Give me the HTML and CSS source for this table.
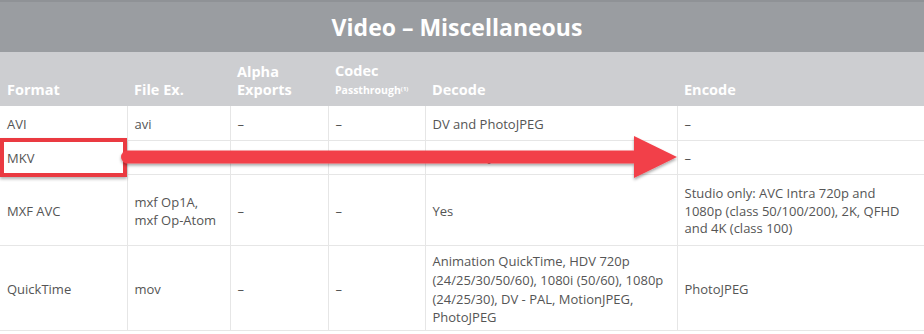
FILE: index.html
```html
<!DOCTYPE html>
<html>
<head>
<meta charset="utf-8">
<link rel="stylesheet" href="styles.css">
</head>
<body>
<div class="sheet">
  <div class="title">Video – Miscellaneous</div>
  <table class="grid">
    <colgroup>
      <col class="c1"><col class="c2"><col class="c3"><col class="c4"><col class="c5"><col class="c6">
    </colgroup>
    <thead>
      <tr class="head">
        <th>Format</th>
        <th>File Ex.</th>
        <th>Alpha<br>Exports</th>
        <th>Codec<br><span class="small">Passthrough<sup>(1)</sup></span></th>
        <th>Decode</th>
        <th>Encode</th>
      </tr>
    </thead>
    <tbody>
      <tr class="r1">
        <td>AVI</td><td>avi</td><td>–</td><td>–</td><td>DV and PhotoJPEG</td><td>–</td>
      </tr>
      <tr class="r2">
        <td>MKV</td><td>mkv</td><td>–</td><td>–</td><td class="hidden-note">Linux only: H.264, H.265</td><td>–</td>
      </tr>
      <tr class="r3">
        <td>MXF AVC</td><td>mxf Op1A,<br>mxf Op-Atom</td><td>–</td><td>–</td><td>Yes</td>
        <td>Studio only: AVC Intra 720p and<br>1080p (class 50/100/200), 2K, QFHD<br>and 4K (class 100)</td>
      </tr>
      <tr class="r4">
        <td>QuickTime</td><td>mov</td><td>–</td><td>–</td>
        <td>Animation QuickTime, HDV 720p<br>(24/25/30/50/60), 1080i (50/60), 1080p<br>(24/25/30), DV - PAL, MotionJPEG,<br>PhotoJPEG</td>
        <td>PhotoJPEG</td>
      </tr>
    </tbody>
  </table>
  <div class="callout"></div>
  <svg class="arrow" width="924" height="334" viewBox="0 0 924 334">
    <defs>
      <filter id="sh" x="-5%" y="-50%" width="110%" height="200%">
        <feDropShadow dx="0" dy="2" stdDeviation="1.5" flood-color="#000" flood-opacity="0.35"/>
      </filter>
    </defs>
    <g filter="url(#sh)" fill="#f2404a">
      <rect x="121" y="150.5" width="520" height="13" rx="6.5"/>
      <polygon points="634,136 677,157 634,178"/>
    </g>
  </svg>
</div>
</body>
</html>
```

FILE: styles.css
```css
html, body {
  margin: 0;
  padding: 0;
  background: #ffffff;
}

.sheet {
  position: relative;
  width: 924px;
  height: 334px;
  overflow: hidden;
  font-family: "Open Sans", "Noto Sans", sans-serif;
}

.title {
  height: 52px;
  box-sizing: border-box;
  border-top: 2px solid #8f9296;
  padding-right: 10px;
  background: #9a9da1;
  color: #ffffff;
  font-weight: 700;
  font-size: 23px;
  line-height: 50px;
  text-align: center;
}

.grid {
  width: 924px;
  border-collapse: collapse;
  table-layout: fixed;
  font-size: 13px;
  color: #555555;
}

.c1 { width: 127px; }
.c2 { width: 103px; }
.c3 { width: 98px; }
.c4 { width: 97px; }
.c5 { width: 252px; }
.c6 { width: 247px; }

.head {
  height: 54px;
  background: #cdced1;
}

.head th {
  color: #ffffff;
  font-weight: 700;
  font-size: 14.5px;
  line-height: 18px;
  text-align: left;
  vertical-align: bottom;
  padding: 0 7px 7px 7px;
  border: none;
}

.small {
  font-size: 10.5px;
}

.small sup {
  font-size: 6px;
  vertical-align: 3px;
}

.grid td {
  padding: 4px 7px 0 7px;
  line-height: 17.5px;
  vertical-align: middle;
  border-left: 1px solid #e6e6e6;
  border-bottom: 1px solid #e6e6e6;
}

.grid td:first-child {
  border-left: none;
}

.grid td.hidden-note {
  padding-top: 0;
}

.r1 { height: 34px; }
.r2 { height: 34px; }
.r3 { height: 71px; }
.r4 { height: 85px; }
.r4 td { line-height: 18.7px; }

.callout {
  position: absolute;
  left: 0;
  top: 138px;
  width: 127px;
  height: 39px;
  box-sizing: border-box;
  border: 4px solid #ea3a41;
  box-shadow: 0 2px 3px rgba(0, 0, 0, 0.3);
}

.arrow {
  position: absolute;
  left: 0;
  top: 0;
}
```
